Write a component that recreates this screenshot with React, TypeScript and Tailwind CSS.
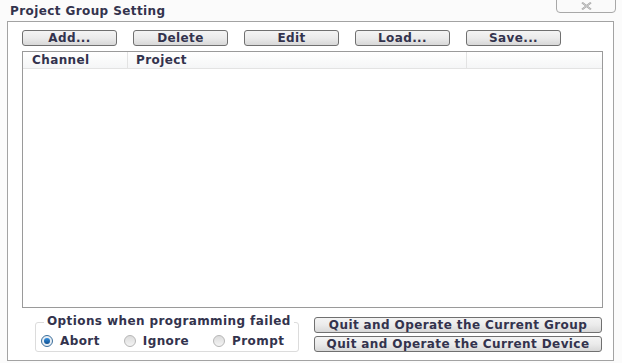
import React from 'react'

const TOP_BUTTONS = ['Add...', 'Delete', 'Edit', 'Load...', 'Save...']

const TEXT = 'text-[12px] font-bold tracking-[0.4px] leading-none text-[#33334d]'

function WinButton({ label, className = '' }: { label: string; className?: string }) {
  return (
    <div
      className={
        'flex items-center justify-center h-[16px] rounded-[3px] border border-[#707070] bg-gradient-to-b from-[#f4f4f4] via-[#ebebeb] to-[#d8d8d8] ' +
        TEXT +
        ' ' +
        className
      }
    >
      {label}
    </div>
  )
}

function Radio({ checked, label }: { checked?: boolean; label: string }) {
  return (
    <div className="flex items-center gap-[7px]">
      <div
        className={
          'w-[12px] h-[12px] rounded-full border flex items-center justify-center ' +
          (checked ? 'border-[#3c6f9c] bg-[#e8eef4]' : 'border-[#b6b6b6] bg-gradient-to-b from-[#dcdcdc] to-[#f4f4f4]')
        }
      >
        {checked && <div className="w-[6px] h-[6px] rounded-full bg-gradient-to-b from-[#2f8ee0] to-[#12508f]" />}
      </div>
      <span className={TEXT}>{label}</span>
    </div>
  )
}

export default function App() {
  return (
    <div
      className="w-[622px] h-[363px] bg-[#fbfbfb] relative flex flex-col overflow-hidden"
      style={{ fontFamily: '"DejaVu Sans", Verdana, sans-serif' }}
    >
      {/* Title */}
      <div className={'h-[21px] flex items-center pl-[10px] ' + TEXT}>Project Group Setting</div>
      <div className="absolute top-[-1px] left-[556px] w-[60px] h-[14px] border border-[#a8a8a8] rounded-b-[4px] bg-[#fafafa] flex items-center justify-center">
        <svg width="11" height="8" viewBox="0 0 11 8">
          <path d="M1 0.5 L10 7.5 M10 0.5 L1 7.5" stroke="#a0a0a0" strokeWidth="1.8" fill="none" />
          <path d="M1 0.5 L10 7.5 M10 0.5 L1 7.5" stroke="#f4f4f4" strokeWidth="0.5" fill="none" />
        </svg>
      </div>

      {/* Frame */}
      <div className="ml-[7px] w-[607px] h-[340px] border border-[#a3a3a3] bg-white flex flex-col pl-[14px] pt-[8px]">
        <div className="flex gap-[16px]">
          {TOP_BUTTONS.map((b) => (
            <WinButton key={b} label={b} className="w-[95px]" />
          ))}
        </div>

        {/* List */}
        <div className="mt-[5px] w-[581px] h-[257px] border border-[#9a9a9a] flex flex-col">
          <div className={'h-[17px] flex border-b border-[#e3e3e3] bg-gradient-to-b from-white to-[#f5f6f7] ' + TEXT}>
            <div className="w-[105px] border-r border-[#e3e3e3] flex items-center pl-[9px]">Channel</div>
            <div className="w-[339px] border-r border-[#e3e3e3] flex items-center pl-[8px]">Project</div>
            <div className="flex-1" />
          </div>
        </div>

        {/* Bottom */}
        <div className="mt-[9px] flex">
          <div className="ml-[13px] mt-[5px] w-[264px] h-[30px] border border-[#dcdcdc] rounded-[3px] relative flex items-end pb-[4px] pl-[5px] gap-[24px]">
            <span className={'absolute top-[-8px] left-[8px] bg-white px-[3px] ' + TEXT}>
              Options when programming failed
            </span>
            <Radio checked label="Abort" />
            <Radio label="Ignore" />
            <Radio label="Prompt" />
          </div>
          <div className="ml-[15px] flex flex-col gap-[3px]">
            <WinButton label="Quit and Operate the Current Group" className="w-[288px]" />
            <WinButton label="Quit and Operate the Current Device" className="w-[288px]" />
          </div>
        </div>
      </div>
    </div>
  )
}
